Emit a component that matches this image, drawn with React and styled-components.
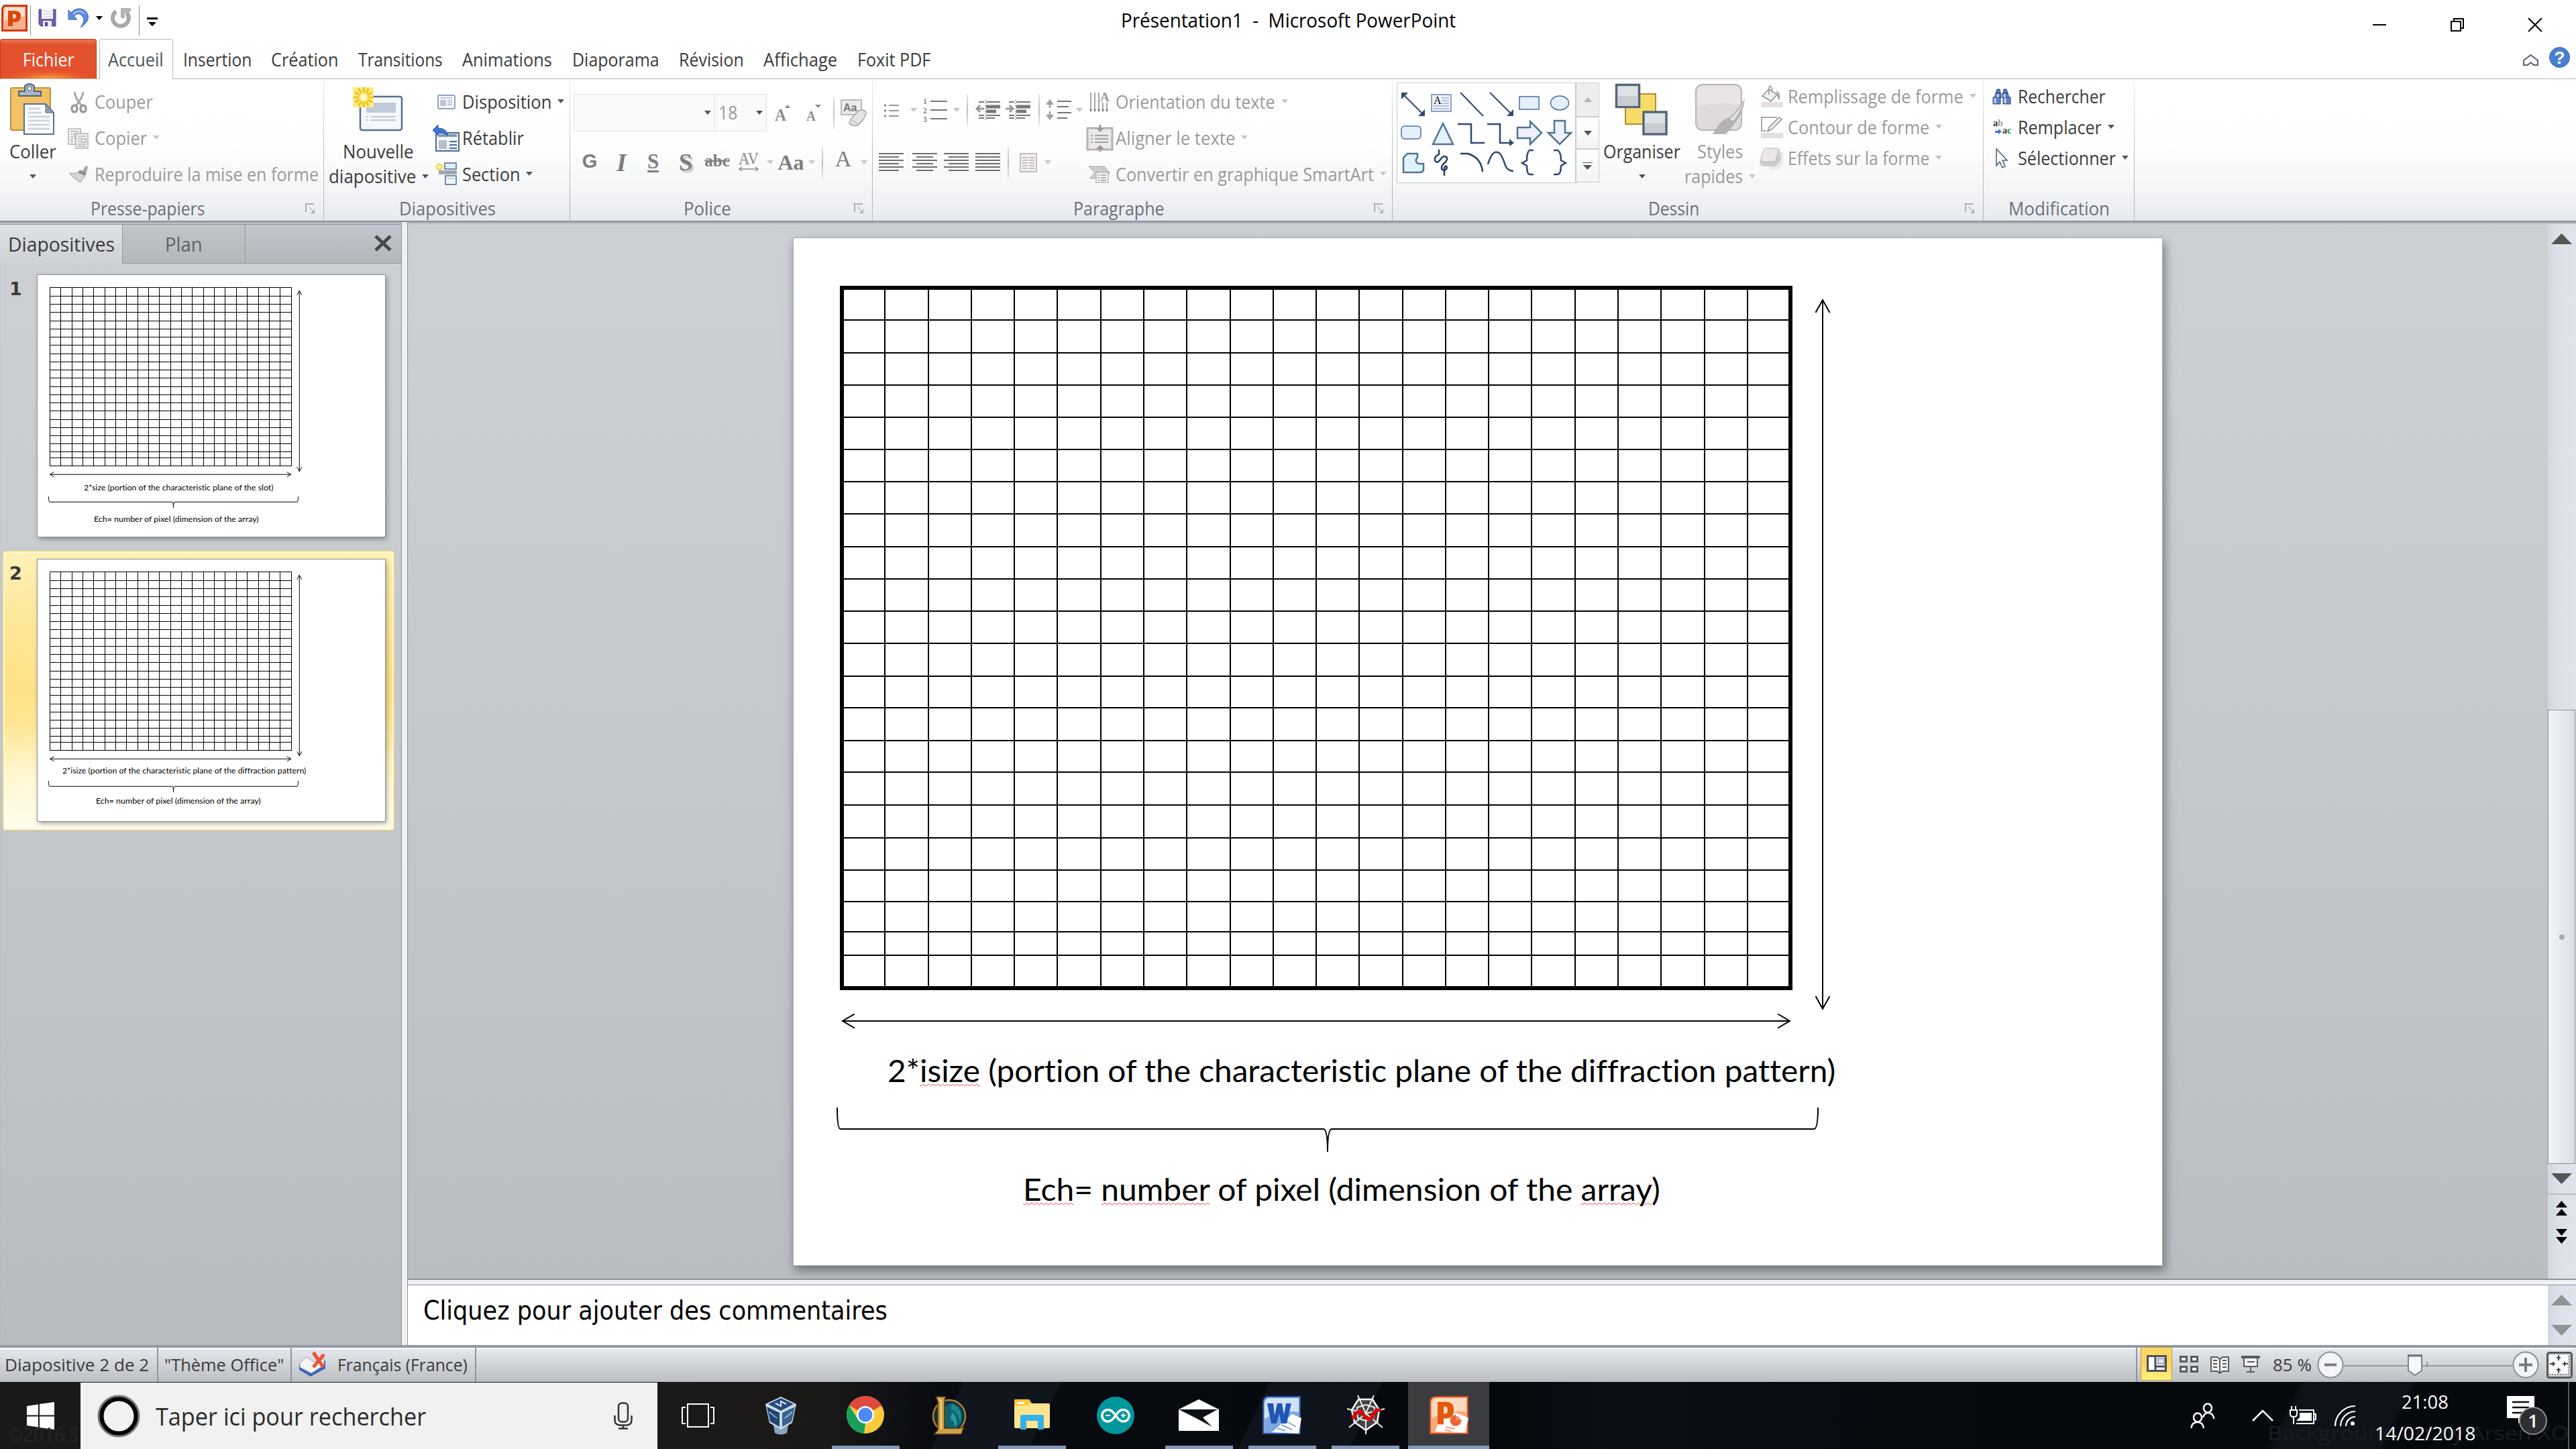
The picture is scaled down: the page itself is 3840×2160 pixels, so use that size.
import React, { useLayoutEffect, useRef, useState } from "react";
import styled, { createGlobalStyle, css } from "styled-components";

const UI = `"Open Sans", "Noto Sans", sans-serif`;

const Global = createGlobalStyle`
  *, *::before, *::after { box-sizing: border-box; }
  body { margin: 0; background: #fff; overflow: hidden; }
  svg { display: block; flex: none; overflow: visible; }
`;

/* ---------- text that fills a given width ---------- */
const FitBox = styled.span`
  display: inline-block;
  flex: none;
  width: ${(p) => p.$w}px;
  white-space: nowrap;
`;
const FitText = styled.span`
  display: inline-block;
  transform-origin: 0 50%;
`;
function Fit({ w, children }) {
  const ref = useRef(null);
  const [scale, setScale] = useState(1);
  useLayoutEffect(() => {
    setScale(w / ref.current.offsetWidth);
  }, [w]);
  return (
    <FitBox $w={w}>
      <FitText ref={ref} style={{ transform: `scaleX(${scale})` }}>{children}</FitText>
    </FitBox>
  );
}

const Svg = ({ w, h, vb, children, ...rest }) => (
  <svg width={w} height={h} viewBox={vb || `0 0 ${w} ${h}`} preserveAspectRatio="none" {...rest}>{children}</svg>
);

/* ---------- shell ---------- */
const Screen = styled.div`
  width: 3840px;
  height: 2160px;
  display: flex;
  flex-direction: column;
  font: 26.5px/36px ${UI};
  color: #3b3b3b;
  overflow: hidden;
`;

/* ---------- title bar ---------- */
const TitleBar = styled.header`
  height: 58px;
  display: grid;
  grid-template-columns: 1671px 1fr 351px;
  background: #fff;
`;
const QuickAccess = styled.div`
  display: grid;
  grid-template-columns: 43px 4px 47px 46px 16px 48px 6px 34px;
  align-items: center;
  justify-items: center;
  padding-bottom: 11px;
`;
const QuickRule = styled.i`
  width: 1px;
  height: 45px;
  margin-top: 8px;
  background: #8d9096;
`;
const WindowTitle = styled.div`
  font-size: 29px;
  line-height: 60px;
  color: #000;
`;
const WindowButtons = styled.div`
  display: grid;
  grid-template-columns: repeat(3, 116px);
  align-items: center;
  justify-items: center;
  padding-top: 9px;
`;
const Lowered = styled.span`
  padding-top: ${(p) => p.$by}px;
`;

const TabRow = styled.nav`
  height: 60px;
  display: flex;
  border-bottom: 1px solid #b6babf;
  line-height: 62px;
`;
const FileTab = styled.div`
  width: 144px;
  height: 59px;
  padding-left: 33px;
  color: #fff;
  border: 1px solid #c43a17;
  border-bottom: 0;
  border-radius: 4px 4px 0 0;
  line-height: 60px;
  background: radial-gradient(ellipse 72px 13px at 50% 100%, #fba544, rgba(240, 110, 50, 0.5) 60%, transparent), linear-gradient(#ee7650, #e3512c 14%, #e4502e 80%, #e0501f);
`;
const ActiveTab = styled.div`
  width: 110px;
  height: 60px;
  margin-left: 4px;
  padding-left: 12px;
  color: #4d5560;
  background: #fff;
  border: 1px solid #b6babf;
  border-bottom: 0;
  border-radius: 4px 4px 0 0;
  line-height: 60px;
`;
const TabList = styled.div`
  display: flex;
  gap: 29.4px;
  padding-left: 15px;
`;
const TabTools = styled.div`
  margin-left: auto;
  padding: 0 9px 4px 0;
  display: flex;
  gap: 16px;
  align-items: center;
`;

/* ---------- ribbon ---------- */
const Ribbon = styled.section`
  height: 213px;
  display: flex;
  background: linear-gradient(#fff 0, #fefefe 48%, #f6f7f8 72%, #eeeff2 90%, #e6e9ef);
  border-bottom: 2px solid #8b9097;
`;
const GroupBox = styled.div`
  width: ${(p) => p.$w}px;
  display: grid;
  grid-template-rows: 174px 37px;
  border-right: 1px solid;
  border-image: linear-gradient(#eceef0, #b4b9c0 60%, #b4b9c0) 1;
`;
const GroupBody = styled.div`
  display: flex;
  min-width: 0;
`;
const GroupFooter = styled.div`
  display: flex;
  align-items: center;
  justify-content: space-between;
  padding: 1px 12px 0 ${(p) => p.$x}px;
  color: #6a7180;
`;
function Group({ w, label, labelX, labelW, launcher, children }) {
  return (
    <GroupBox $w={w}>
      <GroupBody>{children}</GroupBody>
      <GroupFooter $x={labelX}>
        <Fit w={labelW}>{label}</Fit>
        {launcher && (
          <Svg w={15} h={16} fill="none" stroke="#aab0b7" strokeWidth="2">
            <path d="M1 13V1H13" />
            <path d="M6 6l4 4" strokeDasharray="2 1" />
            <path d="M14 8v7H8z" fill="#aab0b7" stroke="none" />
          </Svg>
        )}
      </GroupFooter>
    </GroupBox>
  );
}

const Caret = styled.i`
  flex: none;
  width: 0;
  height: 0;
  border: 5px solid transparent;
  border-top: 6px solid ${(p) => (p.$dim ? "#c2c6cb" : p.$black ? "#000" : "#555")};
  border-bottom: 0;
`;

const BigButton = styled.div`
  width: ${(p) => p.$w}px;
  display: grid;
  grid-template-rows: 90px 36px 37px;
  justify-items: center;
  align-items: center;
  color: ${(p) => (p.$dim ? "#9a9a9a" : "#3b3b3b")};
`;
const BigLine = styled.div`
  display: flex;
  align-items: center;
  gap: 9px;
`;

const Commands = styled.div`
  padding: ${(p) => p.$top}px 0 0 ${(p) => p.$left || 0}px;
  display: flex;
  flex-direction: column;
`;
const CommandRow = styled.div`
  height: ${(p) => p.$h}px;
  display: flex;
  align-items: center;
  color: ${(p) => (p.$dim ? "#9a9a9a" : "#3b3b3b")};
  ${Caret} { margin: -3px 0 0 9px; }
`;
const IconSlot = styled.span`
  width: 40px;
  margin-right: 4px;
  display: flex;
  justify-content: center;
`;
const Command = ({ h = 54, dim, icon, w, label, caret }) => (
  <CommandRow $h={h} $dim={dim}>
    <IconSlot>{icon}</IconSlot>
    <Fit w={w}>{label}</Fit>
    {caret && <Caret $dim={dim} />}
  </CommandRow>
);

const ToolRows = styled.div`
  padding: 22px 0 0 ${(p) => p.$x || 0}px;
  display: flex;
  flex-direction: column;
  gap: 22px;
`;
const ToolRow = styled.div`
  height: ${(p) => p.$h}px;
  display: grid;
  grid-template-columns: ${(p) => p.$cols};
  align-items: center;
  justify-items: center;
  padding-bottom: ${(p) => p.$lift || 0}px;
  color: #7d7d7d;
`;
const ToolRule = styled.i`
  width: 2px;
  height: 48px;
  background: linear-gradient(#e6e8eb, #b9bec5 50%, #e6e8eb);
`;
const Glyph = styled.span`
  font-family: ${(p) => (p.$sans ? `"Liberation Sans", sans-serif` : `"Liberation Serif", serif`)};
  font-size: ${(p) => p.$s || 32}px;
  line-height: 32px;
  margin-top: ${(p) => p.$drop || 0}px;
  ${(p) => p.$b && css`font-weight: 700;`}
  ${(p) => p.$i && css`font-style: italic;`}
  ${(p) => p.$u && css`border-bottom: 3px solid #7d7d7d; line-height: 26px;`}
  ${(p) => p.$strike && css`text-decoration: line-through;`}
  ${(p) => p.$shadow && css`text-shadow: 3px 3px 2px #bbb;`}
`;
const ComboBox = styled.div`
  justify-self: stretch;
  height: 56px;
  display: flex;
  align-items: center;
  justify-content: ${(p) => (p.$end ? "flex-end" : "space-between")};
  padding: 0 5px;
  color: #9a9a9a;
  background: #fafafb;
  border: 1px solid #dfe2e6;
  ${(p) => !p.$end && css`border-left: 0;`}
`;

const Gallery = styled.div`
  width: 267px;
  height: 150px;
  margin: 5px 0 0 6px;
  padding: 9px 0 0 1px;
  display: grid;
  grid-template-columns: repeat(6, 44px);
  grid-auto-rows: 44px;
  background: #fff;
  border: 1px solid #c6cacf;
`;
const GalleryScroll = styled.div`
  width: 35px;
  height: 149px;
  margin-top: 5px;
  display: grid;
  grid-template-rows: 51px 48px 50px;
`;
const GalleryButton = styled.div`
  display: flex;
  align-items: center;
  justify-content: center;
  border: 1px solid #c9ccd2;
  background: ${(p) => (p.$off ? "#eeeeee" : "linear-gradient(#fff,#f1f3f5)")};
`;

/* ---------- workspace ---------- */
const Workspace = styled.main`
  height: 1674px;
  display: flex;
  background: linear-gradient(#cdd1d5, #c4c7cc 50%, #b8bbc0);
`;
const SidePanel = styled.aside`
  width: 599px;
  padding-top: 3px;
  border-right: 1px solid #90979c;
  box-shadow: inset 0 3px 3px -1px #a9aeb5;
`;
const PanelTabs = styled.div`
  height: 56px;
  display: grid;
  grid-template-columns: 182px 183px 1fr;
  border-top: 1px solid #90979c;
  line-height: 57px;
  font-size: 29px;
`;
const PanelTab = styled.div`
  padding-left: ${(p) => p.$x}px;
  ${(p) =>
    p.$active
      ? css`background: linear-gradient(#dfe2e6, #cdd0d5);`
      : css`
          color: #5d6266;
          background: linear-gradient(#c0c6c9, #b3b8bc);
          border-left: 1px solid #90979c;
          border-bottom: 1px solid #90979c;
        `}
`;
const PanelClose = styled.div`
  display: flex;
  align-items: center;
  justify-content: flex-end;
  padding: 0 13px 2px 0;
  background: linear-gradient(#c2c6cf, #b3b7bb);
  border-left: 1px solid #90979c;
  border-bottom: 1px solid #90979c;
`;
const ThumbList = styled.div`
  padding: 7px 0 0 4px;
  display: flex;
  flex-direction: column;
  gap: 7px;
`;
const ThumbItem = styled.div`
  width: 584px;
  height: 417px;
  padding: 12px 0 0 9px;
  display: flex;
  border: 1px solid transparent;
  border-radius: 4px;
  ${(p) =>
    p.$selected &&
    css`
      border-color: #f2cf5b;
      background: linear-gradient(#fff1b8, #ffe695 28%, #fee287 50%, #fee694 62%, #fff7cf 80%, #fffdee);
      box-shadow: inset 0 0 0 2px #fff8d8;
    `}
`;
const ThumbNumber = styled.b`
  width: 42px;
  padding-top: 1px;
  font: 700 27px/40px "DejaVu Sans", sans-serif;
  color: #3a3a3a;
`;
const Thumb = styled.div`
  position: relative;
  width: 518px;
  height: 390px;
  background: #fff;
  outline: 1px solid #8b9196;
  box-shadow: 2px 3px 7px rgba(50, 55, 60, 0.5);
  color: #000;
  font-family: Lato, sans-serif;
`;
const Splitter = styled.div`
  ${(p) =>
    p.$h
      ? css`height: 10px; border-top: 2px solid #8f949c; border-bottom: 1px solid #8f949c;`
      : css`width: 9px; border-right: 1px solid #8f949c;`}
  background: #eff0f2;
`;
const Editor = styled.div`
  flex: 1;
  display: flex;
  flex-direction: column;
`;
const SlideArea = styled.div`
  height: 1575px;
  display: flex;
  justify-content: space-between;
  box-shadow: inset 0 3px 3px -1px #a9aeb5;
`;
const Slide = styled.div`
  position: relative;
  width: 2040px;
  height: 1531px;
  margin: 24px 0 0 575px;
  background: #fff;
  box-shadow: 0 0 0 1px #a4abb2, 3px 7px 14px 1px rgba(60, 66, 72, 0.6);
  color: #000;
  font-family: Lato, sans-serif;
`;
const SlideText = styled.div`
  position: absolute;
  left: ${(p) => p.$x}px;
  top: ${(p) => p.$y}px;
  font-size: ${(p) => p.$s}px;
  line-height: ${(p) => p.$s * 1.4}px;
  font-variant-ligatures: none;
`;
const Misspelt = styled.span`
  text-decoration: underline wavy #f26a6a 1px;
  text-underline-offset: 2px;
  text-decoration-skip-ink: none;
`;
const ScrollColumn = styled.div`
  width: 42px;
  margin-top: ${(p) => p.$top || 0}px;
  display: flex;
  flex-direction: column;
  background: linear-gradient(90deg, #d2d8e0, #dde2ea 40%, #dfe3eb);
`;
const ScrollCell = styled.div`
  height: ${(p) => p.$h}px;
  padding-right: 2px;
  display: flex;
  align-items: center;
  justify-content: center;
  ${(p) => p.$line && css`border-bottom: 2px solid #b9bec5;`}
`;
const ScrollThumb = styled.div`
  height: 677px;
  width: 41px;
  display: flex;
  align-items: center;
  justify-content: center;
  border: 1px solid #8b929b;
  background: linear-gradient(90deg, #f2f4f7, #e4e8ee 60%, #d9dee6);
`;
const Grip = styled.i`
  width: 8px;
  height: 8px;
  border-radius: 50%;
  background: #a3aab4;
`;
const Notes = styled.div`
  flex: 1;
  display: flex;
  justify-content: space-between;
  background: #fff;
`;
const NotesText = styled.div`
  padding: 5px 0 0 23px;
  font: 39px/66px "DejaVu Sans Condensed", "DejaVu Sans", sans-serif;
  font-stretch: condensed;
  color: #000;
`;

/* ---------- status bar ---------- */
const StatusBar = styled.footer`
  height: 55px;
  display: flex;
  align-items: center;
  border-top: 4px solid #929aa5;
  background: linear-gradient(#f8fafc 0, #f8fafc 2px, #e3e6eb 3px, #bbbfc4);
  color: #3c3c3c;
  font-size: 26px;
`;
const StatusCell = styled.div`
  width: ${(p) => p.$w}px;
  height: 100%;
  padding: 0 0 2px ${(p) => p.$x}px;
  display: flex;
  align-items: center;
  gap: 17px;
  border-right: 2px solid #91959b;
`;
const StatusTools = styled.div`
  margin-left: auto;
  height: 100%;
  padding: 0 5px 0 5px;
  display: flex;
  align-items: center;
  border-left: 2px solid #91959b;
`;
const ViewActive = styled.div`
  width: 47px;
  height: 50px;
  margin: -4px 11px 0 0;
  display: flex;
  align-items: center;
  justify-content: center;
  border: 1px solid #c6983a;
  border-radius: 3px;
  background: linear-gradient(#fdd868, #fbd463 50%, #fff27b);
`;
const ViewIcons = styled.div`
  display: flex;
  gap: 18px;
  margin-right: 19px;
`;
const ZoomValue = styled.div`
  margin-right: 8px;
  padding-bottom: 2px;
`;
const ZoomTrack = styled.div`
  width: 251px;
  height: 40px;
  padding-left: 95px;
  display: flex;
  align-items: center;
  background: linear-gradient(#8f97a2, #8f97a2) 0 20px / 100% 2px no-repeat;
`;
const FitButton = styled.div`
  margin-left: 11px;
`;

/* ---------- taskbar ---------- */
const Taskbar = styled.div`
  position: relative;
  height: 100px;
  display: flex;
  color: #fff;
  background:
    linear-gradient(90deg, #191919 0 120px, transparent 120px),
    linear-gradient(116deg, transparent 1290px, #11151d 1292px 1420px, transparent 1424px 1700px, #0f141c 1704px 1850px, transparent 1854px 3080px, #0e121a 3090px 3230px, transparent 3240px),
    linear-gradient(90deg, #1c1a18 980px, #1a1918 1230px, #080b10 1400px, #05080c 2220px, #0b0f17 2400px, #06090d 3000px, #05080c);
`;
const Start = styled.div`
  width: 120px;
  display: flex;
  align-items: center;
  justify-content: center;
`;
const Search = styled.div`
  width: 860px;
  margin-top: 1px;
  padding: 0 37px 0 25px;
  display: flex;
  align-items: center;
  justify-content: space-between;
  background: #f1f1f1;
  color: #2b2b2b;
  font-size: 36px;
`;
const SearchLabel = styled.div`
  display: flex;
  align-items: center;
  gap: 23px;
`;
const AppSlot = styled.div`
  width: 124.2px;
  display: flex;
  justify-content: center;
`;
const AppButton = styled.div`
  width: ${(p) => (p.$active ? 121 : 101)}px;
  padding-top: ${(p) => (p.$open ? 3 : 0)}px;
  display: flex;
  align-items: center;
  justify-content: center;
  ${(p) => p.$open && css`border-bottom: 5px solid #8599b9;`}
  ${(p) => p.$active && css`background: #3a3c3e;`}
`;
const Wallpaper = styled.span`
  position: absolute;
  left: ${(p) => p.$x}px;
  top: ${(p) => p.$y}px;
  font-size: 30px;
  color: ${(p) => p.$c};
  white-space: nowrap;
`;
const Tray = styled.div`
  position: relative;
  margin-left: auto;
  display: grid;
  grid-template-columns: 100px 80px 40px 84px 156px 135px 12px;
  align-items: center;
  justify-items: center;
`;
const Clock = styled.div`
  display: grid;
  justify-items: center;
  font-size: 27px;
  line-height: 47px;
  padding-top: 5px;
`;
const Notif = styled.div`
  justify-self: end;
  padding-right: 31px;
`;
const DesktopEdge = styled.i`
  width: 12px;
  height: 100px;
  border-left: 2px solid #56585b;
`;

/* ---------- icons ---------- */
const PptLogo = ({ w, h }) => (
  <Svg w={w} h={h} vb="0 0 58 58">
    <path d="M8 1H57V57H1V10Q1 2 8 1Z" fill="#fba67a" stroke="#d5491d" strokeWidth="2" />
    <path d="M10 3H55V24Q30 20 3 34V12Q3 4 10 3Z" fill="#ffd9bd" />
    <path d="M8 54L16 34L38 25L58 33L53 56Z" fill="#fff" />
    <circle cx="39" cy="37" r="8.500" fill="#ed6536" />
    <path d="M39 37V28A9 9 0 0 1 48 35Z" fill="#fff" />
    <path d="M39 37V30A7 7 0 0 1 46 36Z" fill="#f58e62" />
    <path d="M24 47l14 3M23 51l10 3" stroke="#f09a78" strokeWidth="2" />
    <path d="M12 9H25Q36 9 36 21Q36 34 24 34H21V43H12ZM21 16V27H23Q27 27 27 21Q27 16 23 16Z" fill="#e0590f" fillRule="evenodd" />
  </Svg>
);
const PptSmall = () => (
  <Svg w={39} h={40}>
    <path d="M5 1.500H37.500V38.500H1.500V8Q2 2 5 1.500Z" fill="#fbb08c" stroke="#cf3a10" strokeWidth="3" />
    <path d="M5 4H35V18Q20 16 4 24Z" fill="#fde0cf" />
    <path d="M10 9H20Q29 9 29 17Q29 26 20 26H17V32H10ZM17 14V21H19Q22 21 22 17.500Q22 14 19 14Z" fill="#d9480f" fillRule="evenodd" />
  </Svg>
);
const SaveIcon = () => (
  <Svg w={27} h={27}>
    <path d="M1 1H26V26H4L1 23Z" fill="#6f5bab" stroke="#5a4895" />
    <rect x="5" y="0" width="17" height="15" fill="#f6f7fb" />
    <path d="M7 4H20M7 8H20M7 12H20" stroke="#c6ccd8" />
    <path d="M7 18H20V27H7Z" fill="#e8e9f2" />
    <path d="M10 20h4v6h-4z" fill="#55439b" />
  </Svg>
);
const UndoIcon = () => (
  <Svg w={32} h={30}>
    <path d="M1 3V17H14L9 12Q16 5 22 12Q27 19 19 29Q33 20 30 10Q26 0 15 1Q9 2 5 7Z" fill="#5d8de0" stroke="#3160b8" />
    <path d="M8 9Q17 1 25 8" stroke="#a9c6f5" strokeWidth="2" fill="none" />
  </Svg>
);
const RedoIcon = () => (
  <Svg w={31} h={30} fill="none">
    <path d="M8 5A12 12 0 1 0 24 7" stroke="#a9a9a9" strokeWidth="6" />
    <path d="M15 0H30V5L21 8V15H15Z" fill="#b4b4b4" />
  </Svg>
);
const PasteIcon = () => (
  <Svg w={68} h={77}>
    <rect x="1" y="6" width="59" height="63" rx="2" fill="#f0c265" stroke="#c0913c" strokeWidth="2" />
    <path d="M13 18V11H22V3Q29-3 36 3V11H46V18Z" fill="#a9b6c4" stroke="#4f6278" strokeWidth="2" />
    <circle cx="29" cy="7" r="3" fill="#fff" stroke="#4f6278" />
    <path d="M21 30H53L65 43V75H21Z" fill="#fdfefe" stroke="#53718f" strokeWidth="2" />
    <path d="M53 30V43H65Z" fill="#8aa0b8" stroke="#46627f" />
    <path d="M27 37H45M27 43H47M27 49H59M27 55H59M27 61H59M27 67H59" stroke="#cdd5de" strokeWidth="3" />
  </Svg>
);
const CutIcon = () => (
  <Svg w={25} h={33} fill="none" stroke="#9a9a9a">
    <path d="M6 1Q7 10 17 22M19 1Q18 10 8 22" strokeWidth="3" stroke="#a8a8a8" />
    <ellipse cx="6" cy="26" rx="4" ry="5" strokeWidth="3.500" />
    <ellipse cx="19" cy="26" rx="4" ry="5" strokeWidth="3.500" />
  </Svg>
);
const CopyIcon = () => (
  <Svg w={32} h={31} stroke="#b3adb2" strokeWidth="1.500">
    <path d="M1 1H19V24H1Z" fill="#f5f2f4" />
    <path d="M4 5H16M4 9H8M4 13H8M4 17H8M4 20H8M10 9h6v6h-6z" fill="none" />
    <path d="M12 8H30V30H12Z" fill="#f5f2f4" />
    <path d="M15 12H27M15 16H18M15 20H18M15 24H27M15 27H27M20 16h7v5h-7z" fill="none" />
  </Svg>
);
const BrushIcon = () => (
  <Svg w={30} h={26}>
    <path d="M21 8L25 1Q28-1 29 3L26 12Z" fill="#a5a3a6" />
    <path d="M17 6L27 11L25 15L14 10Z" fill="#8f8d90" />
    <path d="M14 10L25 15L18 25Q8 20 1 11Q9 12 14 10Z" fill="#d7d3d6" stroke="#a5a1a4" />
  </Svg>
);
const Burst = ({ c = 16, s = 1 }) => (
  <g stroke="#f0c419" strokeWidth={3 * s}>
    {[0, 30, 60, 90, 120, 150].map((a) => (
      <line key={a} x1={c - 15 * s} x2={c + 15 * s} y1={c} y2={c} transform={`rotate(${a} ${c} ${c})`} />
    ))}
    <circle cx={c} cy={c} r={6 * s} fill="#fffbd0" stroke="#ffe76a" strokeWidth={2 * s} />
  </g>
);
const NewSlideIcon = () => (
  <Svg w={76} h={68}>
    <rect x="11" y="15" width="62" height="50" rx="3" fill="#f5f8fc" stroke="#55718f" strokeWidth="2.500" />
    <rect x="20" y="24" width="44" height="15" fill="#c2c9d8" />
    <path d="M19 45h4M26 45H64M19 50h4M26 50H64" stroke="#c2c9d8" strokeWidth="2" />
    <rect x="0" y="1" width="31" height="30" fill="#fdeb84" />
    <Burst />
  </Svg>
);
const LayoutIcon = () => (
  <Svg w={27} h={22}>
    <rect x="1" y="1" width="25" height="20" rx="2" fill="#f7f9fc" stroke="#6f87a8" strokeWidth="1.500" />
    <rect x="4" y="8" width="9" height="9" fill="#bcc6d6" />
    <path d="M5 5H22M15 9H22M15 12H22M15 15H22" stroke="#a9b6ca" strokeWidth="1.500" />
  </Svg>
);
const ResetIcon = () => (
  <Svg w={40} h={41}>
    <rect x="5" y="12" width="34" height="27" fill="#eef4fb" stroke="#47699b" strokeWidth="2" />
    <path d="M8 16H36" stroke="#8795ab" strokeWidth="4" />
    <rect x="9" y="23" width="12" height="13" fill="#b7bfc7" />
    <path d="M25 25H36M25 30H36M25 35H36" stroke="#44699f" strokeWidth="2" />
    <path d="M0 8L8 0V5Q21 5 23 16Q15 11 8 12V16Z" fill="#3f76d6" stroke="#2957ad" />
  </Svg>
);
const SectionIcon = () => (
  <Svg w={32} h={32}>
    <rect x="14" y="-1" width="17" height="9" fill="#e3efff" stroke="#486a99" strokeWidth="1.500" />
    <path d="M5 13H32" stroke="#9da5ad" strokeWidth="6" />
    <rect x="15" y="18" width="16" height="13" fill="#f1f7ff" stroke="#486a99" strokeWidth="1.500" />
    <path d="M18 22H28" stroke="#8ba0bb" />
    <g transform="translate(0 -1)"><Burst c={6} s={0.4} /></g>
  </Svg>
);
const EraserIcon = () => (
  <Svg w={40} h={41}>
    <rect x="1" y="1" width="30" height="22" fill="#eceaec" stroke="#bdb8bc" strokeWidth="2" />
    <text x="4" y="18" fontFamily="Liberation Sans" fontWeight="700" fontSize="16" fill="#777">Aa</text>
    <path d="M24 20Q32 12 38 19Q38 27 27 38Q18 42 13 35Q14 30 24 20Z" fill="#e6e1e4" stroke="#a7a2a5" strokeWidth="1.500" />
    <path d="M17 31L26 37" stroke="#a7a2a5" />
  </Svg>
);
const SizeIcon = ({ up }) => (
  <Svg w={24} h={24} fill="#8c8c8c">
    <text x="0" y="24" fontFamily="Liberation Serif" fontWeight="700" fontSize={up ? 25 : 21} textLength={up ? 17 : 14} lengthAdjust="spacingAndGlyphs">A</text>
    <path d={up ? "M15 5L19 0L23 5Z" : "M13 0H22L17.500 5Z"} />
  </Svg>
);
const SpacingGlyph = () => (
  <Svg w={30} h={30} fill="#8c8c8c">
    <text x="0" y="18" fontFamily="Liberation Serif" fontSize="26" textLength="30" lengthAdjust="spacingAndGlyphs">AV</text>
    <path d="M1 25H29M5 22L1 25L5 28M25 22L29 25L25 28" fill="none" stroke="#8c8c8c" strokeWidth="1.500" />
  </Svg>
);
const BulletsIcon = () => (
  <Svg w={23} h={21} stroke="#777" strokeWidth="1.500">
    <path d="M8 3H23M8 11H23M8 19H23" />
    <path d="M1 3h3M1 11h3M1 19h3" stroke="#8a8a8a" strokeWidth="3" />
  </Svg>
);
const NumbersIcon = () => (
  <Svg w={37} h={37} stroke="#777" strokeWidth="2">
    <path d="M12 5H37M12 18H37M12 31H37" />
    <g fill="#888" stroke="none" fontFamily="Liberation Serif" fontWeight="700" fontSize="12">
      <text x="1" y="9">1</text><text x="1" y="23">2</text><text x="1" y="36">3</text>
    </g>
  </Svg>
);
const IndentIcon = ({ right }) => (
  <Svg w={38} h={32} stroke="#777" strokeWidth="2">
    <path d="M6 4H14M17 4H38M6 24H14M17 24H38M6 28H14M17 28H30" />
    <path d="M17 11H38M17 18H32" strokeWidth="5" />
    <path d="M16 1V31" strokeDasharray="2 2" strokeWidth="1" />
    <path d={right ? "M1 14H12M7 9L12 14L7 19" : "M3 14H14M8 9L3 14L8 19"} fill="none" strokeWidth="3" stroke="#9a9a9a" />
  </Svg>
);
const LineSpacingIcon = () => (
  <Svg w={38} h={32} stroke="#777" strokeWidth="2">
    <path d="M17 3H38M17 11H34M17 20H38M17 28H32" />
    <path d="M6 3V13M6 18V28" stroke="#aaa" strokeWidth="3" />
    <path d="M0 8L6 0L12 8ZM0 23L6 31L12 23Z" fill="#a0a0a0" stroke="none" />
  </Svg>
);
const ALIGN = {
  left: ["0 37", "0 30", "0 37", "0 30", "0 37", "0 30"],
  center: ["0 37", "6 31", "0 37", "6 31", "0 37", "6 31"],
  right: ["0 37", "7 37", "0 37", "7 37", "0 37", "7 37"],
  full: ["0 37", "0 37", "0 37", "0 37", "0 37", "0 37"],
};
const AlignIcon = ({ kind }) => (
  <Svg w={37} h={28} stroke="#6f6f6f" strokeWidth="2">
    {ALIGN[kind].map((r, i) => {
      const [a, b] = r.split(" ");
      return <line key={i} x1={a} x2={b} y1={1 + i * 5} y2={1 + i * 5} />;
    })}
  </Svg>
);
const ColumnsIcon = () => (
  <Svg w={26} h={29}>
    <rect x="1" y="1" width="24" height="27" fill="#f4f0f3" stroke="#b0aaaf" strokeWidth="1.500" />
    <path d="M4 7h8M4 11h8M4 15h8M4 19h8M4 23h8M14 7h8M14 11h8M14 15h8M14 19h8M14 23h8" stroke="#b5b0b4" strokeWidth="1.500" />
  </Svg>
);
const OrientIcon = () => (
  <Svg w={30} h={31} stroke="#777" strokeWidth="1.300">
    <path d="M2 1V29M8 1V29M14 1V29M20 16V29M26 16V29" />
    <path d="M0 26h4l-2 4zM6 26h4l-2 4zM12 26h4l-2 4zM18 26h4l-2 4zM24 26h4l-2 4z" fill="#777" stroke="none" />
    <text x="16" y="14" fill="#999" stroke="none" fontFamily="Liberation Serif" fontWeight="700" fontSize="19">A</text>
  </Svg>
);
const AlignTextIcon = () => (
  <Svg w={41} h={40}>
    <rect x="2" y="5" width="37" height="32" fill="#ebe7ea" stroke="#b6b2b5" strokeWidth="3" />
    <path d="M7 16h3M13 16H33M7 21h3M13 21H33M7 26h3M13 26H33" stroke="#8f8f8f" strokeWidth="1.500" />
    <path d="M21 0V6M21 40V35" stroke="#999" strokeWidth="3" />
    <path d="M15 5H27L21 11ZM15 36H27L21 30Z" fill="#999" />
  </Svg>
);
const SmartArtIcon = () => (
  <Svg w={32} h={26}>
    <path d="M0 1H23L31 10L26 19H2L9 10Z" fill="#cfcbce" stroke="#a5a1a4" />
    <rect x="11" y="10" width="18" height="15" fill="#f5f3f5" stroke="#a5a1a4" />
    <path d="M14 14h2M18 14H26M14 18h2M18 18H26M14 22h2M18 22H26" stroke="#9a969a" strokeWidth="1.500" />
  </Svg>
);
const ArrangeIcon = () => (
  <Svg w={79} h={77}>
    <rect x="15" y="15" width="45" height="45" fill="#f7dc6a" stroke="#b08d2f" strokeWidth="2" />
    <rect x="1.500" y="1.500" width="34" height="33" fill="#dfe2e4" stroke="#56657a" strokeWidth="3.500" />
    <rect x="4" y="18" width="30" height="15" fill="#c9cdd1" />
    <rect x="42" y="42" width="34" height="33" fill="#dfe2e4" stroke="#56657a" strokeWidth="3.500" />
    <rect x="44" y="59" width="30" height="14" fill="#c9cdd1" />
  </Svg>
);
const StylesIcon = () => (
  <Svg w={74} h={76}>
    <rect x="1" y="1" width="68" height="68" rx="10" fill="#dedadd" stroke="#b9b5b8" strokeWidth="2" />
    <path d="M3 12Q3 3 12 3H58Q67 3 67 12V30Q30 26 3 34Z" fill="#e8e4e7" />
    <path d="M74 22Q72 44 58 60L46 75H26Q36 56 46 52Q56 50 74 22Z" fill="#b5b2b4" />
    <path d="M73 26Q66 44 56 56L52 52Q64 42 73 26Z" fill="#e5e3e4" />
  </Svg>
);
const FillIcon = () => (
  <Svg w={33} h={34}>
    <rect x="0" y="25" width="33" height="8" fill="#e4dfe2" />
    <path d="M2 16L12 6L24 14L15 24Z" fill="#f0f0f0" stroke="#8f8f8f" strokeWidth="1.500" />
    <path d="M12 14V3Q14-1 16 4L17 9" fill="none" stroke="#999" strokeWidth="1.500" />
    <path d="M23 8Q31 13 27 23Q24 18 23 8Z" fill="#a6a6a6" />
  </Svg>
);
const OutlineIcon = () => (
  <Svg w={33} h={34}>
    <rect x="0" y="25" width="33" height="8" fill="#e4dfe2" />
    <path d="M24 2H1V22H8" fill="none" stroke="#8f8f8f" strokeWidth="1.500" />
    <path d="M10 23L12 17L27 2L31 5L16 20Z" fill="#eee" stroke="#909090" strokeWidth="1.500" />
  </Svg>
);
const EffectsIcon = () => (
  <Svg w={38} h={34}>
    <path d="M12 8H36V26L30 33H16Z" fill="#e3e3e3" opacity=".7" />
    <path d="M9 2H27Q31 2 31 6L33 20L25 29H7Q1 28 1 21Z" fill="#cfcbce" />
    <path d="M10 2H26Q30 3 29 7L25 20Q24 22 21 22H5Q2 21 3 17L7 5Q8 2 10 2Z" fill="#eae6e9" stroke="#b9b5b8" />
  </Svg>
);
const FindIcon = () => (
  <Svg w={28} h={24} fill="#5f80bd" stroke="#27457e">
    <path d="M7 1h4l1 6H5zM17 1h4l2 6h-7zM5 7h8v7H3zM15 7h8l2 7H15z" />
    <path d="M1 13H12V23H1ZM16 13H27V23H16Z" />
    <path d="M4 14V22M19 14V22M8 8V13M18 8V13" stroke="#c4d4f2" strokeWidth="3" />
  </Svg>
);
const ReplaceIcon = () => (
  <Svg w={27} h={23}>
    <g fontFamily="Liberation Serif" fontWeight="700" fontSize="14">
      <text x="0" y="9" fill="#333">a</text><text x="7" y="9" fill="#999">b</text>
      <text x="14" y="20" fill="#333">a</text><text x="21" y="20" fill="#1f7a1f">c</text>
    </g>
    <path d="M3 12V16H8V13L13 17L8 21V19H3Z" fill="#3f6fd0" />
  </Svg>
);
const SelectIcon = () => (
  <Svg w={20} h={30}>
    <path d="M2 1V26L7 20L11 29L15 27L11 18H18Z" fill="#fff" stroke="#4b5f7c" strokeWidth="1.500" />
  </Svg>
);

const NAVY = "#2f4876";
const TEAL = "#4f7397";
const SHAPES = [
  <g key="0" stroke={NAVY} fill={NAVY} strokeWidth="2"><path d="M8 8L36 36" /><path d="M5 5h10L5 15zM40 40H30L40 30z" stroke="none" /></g>,
  <g key="1"><rect x="6" y="8" width="29" height="25" fill="#eef3fb" stroke="#6f83a8" strokeWidth="1.500" /><text x="9" y="22" fontFamily="Liberation Serif" fontSize="16" fill="#000">A</text><path d="M21 13H32M21 17H32M21 21H32M9 25H32M9 29H32" stroke="#9fb2d8" strokeWidth="1.500" /></g>,
  <path key="2" d="M5 5L39 40" stroke={NAVY} strokeWidth="2" />,
  <g key="3" stroke={NAVY} strokeWidth="2"><path d="M5 5L36 36" /><path d="M40 40H30L40 30z" fill={NAVY} stroke="none" /></g>,
  <rect key="4" x="5" y="11" width="29" height="19" fill="#e6f0fc" stroke="#4b6fa5" strokeWidth="1.500" />,
  <ellipse key="5" cx="21" cy="20.500" rx="13.500" ry="10.500" fill="#e6f0fc" stroke="#4b6fa5" strokeWidth="1.500" />,
  <rect key="6" x="5" y="11" width="29" height="19" rx="5" fill="#e6f0fc" stroke="#4b6fa5" strokeWidth="1.500" />,
  <path key="7" d="M23 7L38 38H8Z" fill="#e6f2fb" stroke={TEAL} strokeWidth="2.500" />,
  <path key="8" d="M1 8H21V36H41" fill="none" stroke={NAVY} strokeWidth="2.500" />,
  <g key="9"><path d="M1 8H20V36H36" fill="none" stroke={NAVY} strokeWidth="2.500" /><path d="M34 30L41 36L34 41z" fill={NAVY} /></g>,
  <path key="10" d="M2 13H21V4L38 21L21 38V29H2Z" fill="#eef1fc" stroke={TEAL} strokeWidth="2.500" />,
  <path key="11" d="M13 3H29V21H38L21 38L4 21H13Z" fill="#eef1fc" stroke={TEAL} strokeWidth="2.500" />,
  <path key="12" d="M8 33V14L14 8H29V14Q24 19 30 23H38V33Q36 36 32 36H8Z" fill="#e0f2fb" stroke={TEAL} strokeWidth="2.500" />,
  <path key="13" d="M17 2V9Q10 12 11 18Q14 24 19 17Q24 9 29 14Q30 18 24 23Q19 29 22 32Q27 34 29 29Q28 24 25 29V41" fill="none" stroke="#234261" strokeWidth="2.500" />,
  <path key="14" d="M5 8H16Q36 14 38 35" fill="none" stroke="#234261" strokeWidth="2.500" />,
  <path key="15" d="M2 24Q8 4 16 6Q22 6 28 26Q32 34 40 34" fill="none" stroke={NAVY} strokeWidth="2.500" />,
  <path key="16" d="M26 3H20Q16 6 16 18L9 22L16 26Q16 38 20 39H26" fill="none" stroke={NAVY} strokeWidth="2.500" />,
  <path key="17" d="M12 3H18Q23 6 23 18L30 22L23 26Q23 38 18 39H12" fill="none" stroke={NAVY} strokeWidth="2.500" />,
];

/* ---------- slide drawing ---------- */
const COLS = Array.from({ length: 21 }, (_, i) => 72 + (i + 1) * 64.28);
const ROWS = [123, 172, 220, 268, 316, 364, 412, 461, 509, 557, 605, 654, 701, 750, 797, 846, 895, 943, 990, 1035, 1070];
const Drawing = ({ w, h, sw, frame, head }) => (
  <Svg w={w} h={h} vb={`0 0 2040 1531`} fill="none" stroke="#000" strokeWidth={sw}>
    <g shapeRendering="crispEdges">
      <rect x="72" y="74" width="1414" height="1043.500" strokeWidth={frame} />
      {COLS.map((x) => <line key={x} x1={x} x2={x} y1="74" y2="1117" />)}
      {ROWS.map((y) => <line key={y} x1="72" x2="1486" y1={y - 1} y2={y - 1} />)}
    </g>
    <path d={`M1534 92V1149M${1534 - head} ${92 + head * 1.8}L1534 92L${1534 + head} ${92 + head * 1.8}M${1534 - head} ${1149 - head * 1.8}L1534 1149L${1534 + head} ${1149 - head * 1.8}`} />
    <path d={`M73 1167H1485M${73 + head * 1.7} ${1167 - head}L73 1167L${73 + head * 1.7} ${1167 + head}M${1485 - head * 1.7} ${1167 - head}L1485 1167L${1485 - head * 1.7} ${1167 + head}`} />
    <path d="M65 1296Q65 1328 70 1328H790Q796 1329 796 1362Q796 1329 802 1328H1521Q1527 1328 1527 1296" />
  </Svg>
);

const ScrollArrow = ({ down, off }) => (
  <Svg w={31} h={16}><path d={down ? "M0 0H31L15.500 16Z" : "M0 16H31L15.500 0Z"} fill={off ? "#8a9795" : "#555"} /></Svg>
);
const DoubleArrow = ({ down }) => (
  <Svg w={17} h={22} fill="#000"><path d={down ? "M0 0H17L8.500 10ZM0 12H17L8.500 22Z" : "M0 10H17L8.500 0ZM0 22H17L8.500 12Z"} /></Svg>
);
const ZoomButton = ({ plus }) => (
  <Svg w={40} h={41}>
    <ellipse cx="20" cy="20.500" rx="18.500" ry="19" fill="#f4f5f7" stroke="#8a919a" strokeWidth="2" />
    <path d={plus ? "M10 20.500H30M20 10V31" : "M11 20.500H29"} stroke="#777b80" strokeWidth="4" />
  </Svg>
);

/* ---------- app icons ---------- */
const ChromeIcon = () => (
  <Svg w={56} h={56}>
    <circle cx="28" cy="28" r="28" fill="#fcc93c" />
    <path d="M28 28L3.800 14A28 28 0 0 1 52.200 14Z" fill="#dd4b3e" />
    <path d="M28 0A28 28 0 0 1 53 15.500H28Z" fill="#dd4b3e" />
    <path d="M3.800 14L17 35L28 41L26 56A28 28 0 0 1 3.800 14Z" fill="#1a9f5b" />
    <circle cx="28" cy="28" r="13" fill="#fff" />
    <circle cx="28" cy="28" r="10.500" fill="#4c8bf5" />
  </Svg>
);
const LolIcon = () => (
  <Svg w={54} h={58}>
    <ellipse cx="27" cy="30" rx="24" ry="24" fill="#0a3640" stroke="#b07f30" strokeWidth="2.500" />
    <ellipse cx="31" cy="30" rx="15" ry="19" fill="#0f6470" />
    <path d="M31 12Q48 18 44 42Q40 22 29 20Z" fill="#1c8590" />
    <path d="M31 24Q42 34 36 48Q35 36 29 34Z" fill="#2a9ba3" />
    <path d="M7 1H22L20 6V48H42L49 46L45 57H4L10 51V8Z" fill="#d0a046" stroke="#4d3410" strokeWidth="1.500" />
    <path d="M12 5L15 8V50" fill="none" stroke="#f2d382" strokeWidth="2" />
  </Svg>
);
const ExplorerIcon = () => (
  <Svg w={54} h={46}>
    <path d="M0 2Q0 0 3 0H22L26 6H51Q53 6 53 8V41Q53 43 51 43H2Q0 43 0 41Z" fill="#ffe48f" />
    <path d="M0 2Q0 0 3 0H22L25 5L20 9H0Z" fill="#fcc531" />
    <rect x="4" y="4" width="11" height="3" fill="#fff" />
    <path d="M9 45V26Q9 23 12 23H41Q44 23 44 26V45H35V32H18V45Z" fill="#33b1e8" />
  </Svg>
);
const ArduinoIcon = () => (
  <Svg w={56} h={56} fill="none" stroke="#fff">
    <circle cx="28" cy="28" r="28" fill="#00979c" stroke="none" />
    <path d="M28 28Q22 19 16.500 19.500A8.700 8.700 0 0 0 16.500 37Q22 37 28 28Q34 19 39.500 19.500A8.700 8.700 0 0 1 39.500 37Q34 37 28 28Z" strokeWidth="3.500" />
    <path d="M13 28H20M36 28H43M39.500 24.500V31.500" strokeWidth="2" />
  </Svg>
);
const MailIcon = () => (
  <Svg w={60} h={47}>
    <path d="M0 15L30 0L60 15V47H0Z" fill="#fff" />
    <path d="M0 15H58L36 27L50 41L24 27Z" fill="#0d1015" />
  </Svg>
);
const WordIcon = () => (
  <Svg w={58} h={57}>
    <path d="M8 1H56V56H1V10Q1 2 8 1Z" fill="#7fa8df" stroke="#2c559d" strokeWidth="2" />
    <path d="M10 3H54V24Q28 20 3 34V12Q3 4 10 3Z" fill="#cfe2f7" />
    <path d="M14 54L44 27L58 33L54 56Z" fill="#fff" />
    <path d="M22 48L34 52M28 43L44 50M36 38L50 46" stroke="#8fa6d6" strokeWidth="2" />
    <path d="M7 11H16L18 29L22 11H29L32 29L35 11H43L36 41H28L25 26L21 41H13Z" fill="#1f55b5" />
  </Svg>
);
const SpyderIcon = () => (
  <Svg w={58} h={58} fill="none">
    <path d="M18 6H39L49 22L46 40L29 52L12 40L8 22Z" fill="#454545" stroke="#fff" strokeWidth="2.500" />
    <path d="M17 0L29 27L41 0M1 20L29 27L57 20M4 48L29 27L54 48M29 27V58M16 18L29 14L42 18L40 34L29 38L17 34Z" stroke="#eee" strokeWidth="2" />
    <path d="M10 34Q17 20 24 26Q30 38 38 34Q40 22 49 22" stroke="#e80000" strokeWidth="5" strokeLinecap="round" />
  </Svg>
);
const VBoxIcon = () => (
  <Svg w={54} h={58}>
    <path d="M14 44L36 44L34 55Q25 60 16 55Z" fill="#8ca3c0" />
    <path d="M25 1L48 12L42 40L25 50L8 40L2 12Z" fill="#cbdaea" />
    <path d="M25 3L44 12L25 22L6 12Z" fill="#244a78" />
    <path d="M4 16L23 25V46L9 38Z" fill="#1f4471" />
    <path d="M46 16L27 25V46L41 38Z" fill="#3a628f" />
    <path d="M17 11L25 15L25 8L33 12" stroke="#dfe9f5" strokeWidth="2" fill="none" />
    <path d="M8 24L19 33M42 24L31 33" stroke="#b7c9df" strokeWidth="2" strokeDasharray="3 1" />
  </Svg>
);
const TaskViewIcon = () => (
  <Svg w={53} h={36} fill="none" stroke="#fff" strokeWidth="2">
    <rect x="9" y="1" width="31" height="34" />
    <path d="M6 6H1V30H6M43 6H48V30H43" />
  </Svg>
);

const TABS = [["Insertion", 102], ["Création", 100], ["Transitions", 126], ["Animations", 134], ["Diaporama", 130], ["Révision", 97], ["Affichage", 110], ["Foxit PDF", 109]];
const APPS = [
  { id: "view", icon: <TaskViewIcon /> },
  { id: "vbox", icon: <VBoxIcon /> },
  { id: "chrome", icon: <ChromeIcon />, open: true },
  { id: "lol", icon: <LolIcon /> },
  { id: "files", icon: <ExplorerIcon />, open: true },
  { id: "arduino", icon: <ArduinoIcon /> },
  { id: "mail", icon: <MailIcon />, open: true },
  { id: "word", icon: <WordIcon />, open: true },
  { id: "spyder", icon: <SpyderIcon />, open: true },
  { id: "ppt", icon: <PptLogo w={58} h={57} />, open: true, active: true },
];
const THUMBS = [
  { n: 1, a: ["2*size (portion of the characteristic plane of the slot)", 69, 282, 309], b: [84, 246, 356] },
  { n: 2, a: ["2*isize (portion of the characteristic plane of the diffraction pattern)", 37, 363, 307], b: [87, 246, 352], selected: true },
];

function RibbonBar() {
  return (
    <Ribbon>
      <Group w={483} label="Presse-papiers" labelX={135} labelW={171} launcher>
        <BigButton $w={97}>
          <PasteIcon />
          <Fit w={70}>Coller</Fit>
          <Caret />
        </BigButton>
        <Commands $top={7}>
          <Command dim icon={<CutIcon />} w={87} label="Couper" />
          <Command dim icon={<CopyIcon />} w={78} label="Copier" caret />
          <Command dim icon={<BrushIcon />} w={334} label="Reproduire la mise en forme" />
        </Commands>
      </Group>

      <Group w={367} label="Diapositives" labelX={112} labelW={144}>
        <BigButton $w={162}>
          <NewSlideIcon />
          <Fit w={106}>Nouvelle</Fit>
          <BigLine><Fit w={130}>diapositive</Fit><Caret /></BigLine>
        </BigButton>
        <Commands $top={7}>
          <Command icon={<LayoutIcon />} w={133} label="Disposition" caret />
          <Command icon={<ResetIcon />} w={92} label="Rétablir" />
          <Command icon={<SectionIcon />} w={86} label="Section" caret />
        </Commands>
      </Group>

      <Group w={451} label="Police" labelX={169} labelW={71} launcher>
        <ToolRows $x={5}>
          <ToolRow $h={56} $cols="211px 77px 47px 47px 12px 48px">
            <ComboBox $end><Caret /></ComboBox>
            <ComboBox><Fit w={28}>18</Fit><Caret /></ComboBox>
            <SizeIcon up />
            <SizeIcon />
            <ToolRule />
            <EraserIcon />
          </ToolRow>
          <ToolRow $h={44} $cols="48px 47px 47px 50px 44px 50px 14px 48px 13px 19px 44px 18px">
            <Glyph $sans $b $s={29} $drop={-5}>G</Glyph>
            <Glyph $b $i $s={38}>I</Glyph>
            <Glyph $b $u $s={31}>S</Glyph>
            <Glyph $b $shadow $s={36}>S</Glyph>
            <Glyph $strike $b $s={25} $drop={-5}>abc</Glyph>
            <SpacingGlyph />
            <Caret $dim />
            <Glyph $b $s={32}>Aa</Glyph>
            <Caret $dim />
            <ToolRule />
            <Glyph $s={34} $drop={-11}>A</Glyph>
            <Caret $dim />
          </ToolRow>
        </ToolRows>
      </Group>

      <Group w={775} label="Paragraphe" labelX={299} labelW={136} launcher>
        <ToolRows>
          <ToolRow $h={56} $lift={8} $cols="54px 14px 49px 16px 16px 43px 48px 15px 43px 20px">
            <BulletsIcon />
            <Caret $dim />
            <NumbersIcon />
            <Caret $dim />
            <ToolRule />
            <IndentIcon />
            <IndentIcon right />
            <ToolRule />
            <LineSpacingIcon />
            <Caret $dim />
          </ToolRow>
          <ToolRow $h={44} $lift={4} $cols="54px 46px 48px 46px 16px 43px 16px">
            <AlignIcon kind="left" />
            <AlignIcon kind="center" />
            <AlignIcon kind="right" />
            <AlignIcon kind="full" />
            <ToolRule />
            <ColumnsIcon />
            <Caret $dim />
          </ToolRow>
        </ToolRows>
        <Commands $top={7}>
          <Command dim icon={<OrientIcon />} w={238} label="Orientation du texte" caret />
          <Command dim icon={<AlignTextIcon />} w={178} label="Aligner le texte" caret />
          <Command dim icon={<SmartArtIcon />} w={385} label="Convertir en graphique SmartArt" caret />
        </Commands>
      </Group>

      <Group w={881} label="Dessin" labelX={381} labelW={76} launcher>
        <Gallery>
          {SHAPES.map((shape, i) => <Svg key={i} w={44} h={44} fill="none">{shape}</Svg>)}
        </Gallery>
        <GalleryScroll>
          <GalleryButton $off><Svg w={12} h={7}><path d="M0 7H12L6 0Z" fill="#b5b5b5" /></Svg></GalleryButton>
          <GalleryButton><Svg w={12} h={7}><path d="M0 0H12L6 7Z" fill="#555" /></Svg></GalleryButton>
          <GalleryButton><Svg w={15} h={12}><path d="M0 1H15V2H0ZM1 5H14L7.500 12Z" fill="#555" /></Svg></GalleryButton>
        </GalleryScroll>
        <BigButton $w={127}>
          <ArrangeIcon />
          <Fit w={115}>Organiser</Fit>
          <Caret />
        </BigButton>
        <BigButton $w={104} $dim>
          <StylesIcon />
          <Fit w={68}>Styles</Fit>
          <BigLine><Fit w={87}>rapides</Fit><Caret $dim /></BigLine>
        </BigButton>
        <Commands $top={3} $left={6}>
          <Command h={46} dim icon={<FillIcon />} w={262} label="Remplissage de forme" caret />
          <Command h={46} dim icon={<OutlineIcon />} w={211} label="Contour de forme" caret />
          <Command h={46} dim icon={<EffectsIcon />} w={211} label="Effets sur la forme" caret />
        </Commands>
      </Group>

      <Group w={225} label="Modification" labelX={37} labelW={151}>
        <Commands $top={3} $left={7}>
          <Command h={46} icon={<FindIcon />} w={131} label="Rechercher" />
          <Command h={46} icon={<ReplaceIcon />} w={125} label="Remplacer" caret />
          <Command h={46} icon={<SelectIcon />} w={146} label="Sélectionner" caret />
        </Commands>
      </Group>
    </Ribbon>
  );
}

export default function App() {
  return (
    <Screen>
      <Global />
      <TitleBar>
        <QuickAccess>
          <PptSmall />
          <QuickRule />
          <SaveIcon />
          <UndoIcon />
          <Caret $black />
          <RedoIcon />
          <QuickRule />
          <Lowered $by={12}><Svg w={16} h={13}><path d="M0 0H16V3H0ZM2 7H14L8 13Z" /></Svg></Lowered>
        </QuickAccess>
        <WindowTitle><Fit w={499}>Présentation1&nbsp; -&nbsp; Microsoft PowerPoint</Fit></WindowTitle>
        <WindowButtons>
          <Svg w={20} h={2}><rect width="20" height="2" /></Svg>
          <Svg w={20} h={20} fill="none" stroke="#000" strokeWidth="2"><path d="M5 5V1H19V15H15M1 5H15V19H1Z" /></Svg>
          <Svg w={20} h={20} stroke="#000" strokeWidth="2"><path d="M0 0L20 20M20 0L0 20" /></Svg>
        </WindowButtons>
      </TitleBar>

      <TabRow>
        <FileTab><Fit w={77}>Fichier</Fit></FileTab>
        <ActiveTab><Fit w={83}>Accueil</Fit></ActiveTab>
        <TabList>
          {TABS.map(([t, w]) => <Fit key={t} w={w}>{t}</Fit>)}
        </TabList>
        <TabTools>
          <Lowered $by={7}>
            <Svg w={23} h={17} fill="#fff" stroke="#5a626c" strokeWidth="2">
              <path d="M1 9L11.500 1L22 9V16H16L11.500 12L7 16H1Z" />
            </Svg>
          </Lowered>
          <Svg w={31} h={31}>
            <circle cx="15.500" cy="15.500" r="15" fill="#4a7fd0" stroke="#2f62b3" />
            <text x="15.500" y="25" textAnchor="middle" fontFamily="Liberation Sans" fontWeight="700" fontSize="26" fill="#fff">?</text>
          </Svg>
        </TabTools>
      </TabRow>

      <RibbonBar />

      <Workspace>
        <SidePanel>
          <PanelTabs>
            <PanelTab $active $x={12}><Fit w={159}>Diapositives</Fit></PanelTab>
            <PanelTab $x={63}><Fit w={56}>Plan</Fit></PanelTab>
            <PanelClose>
              <Svg w={28} h={25} stroke="#454749" strokeWidth="5"><path d="M3 2L25 23M25 2L3 23" /></Svg>
            </PanelClose>
          </PanelTabs>
          <ThumbList>
            {THUMBS.map((t) => (
              <ThumbItem key={t.n} $selected={t.selected}>
                <ThumbNumber>{t.n}</ThumbNumber>
                <Thumb>
                  <Drawing w={519} h={390} sw={3.9} frame={4} head={14} />
                  <SlideText $s={11.500} $x={t.a[1]} $y={t.a[3]}><Fit w={t.a[2]}>{t.a[0]}</Fit></SlideText>
                  <SlideText $s={11.500} $x={t.b[0]} $y={t.b[2]}><Fit w={t.b[1]}>Ech= number of pixel (dimension of the array)</Fit></SlideText>
                </Thumb>
              </ThumbItem>
            ))}
          </ThumbList>
        </SidePanel>
        <Splitter />
        <Editor>
          <SlideArea>
            <Slide>
              <Drawing w={2040} h={1531} sw={2} frame={6} head={10.5} />
              <SlideText $s={46} $x={140} $y={1209}>
                <Fit w={1413}>2*<Misspelt>isize</Misspelt> (portion of the characteristic plane of the diffraction pattern)</Fit>
              </SlideText>
              <SlideText $s={46} $x={342} $y={1386}>
                <Fit w={950}><Misspelt>Ech</Misspelt>= <Misspelt>number</Misspelt> of pixel (dimension of the <Misspelt>array</Misspelt>)</Fit>
              </SlideText>
            </Slide>
            <ScrollColumn $top={3}>
              <ScrollCell $h={44}><ScrollArrow /></ScrollCell>
              <ScrollCell $h={680} />
              <ScrollThumb><Grip /></ScrollThumb>
              <ScrollCell $h={46} $line><ScrollArrow down /></ScrollCell>
              <ScrollCell $h={40}><DoubleArrow /></ScrollCell>
              <ScrollCell $h={43}><DoubleArrow down /></ScrollCell>
            </ScrollColumn>
          </SlideArea>
          <Splitter $h />
          <Notes>
            <NotesText><Fit w={692}>Cliquez pour ajouter des commentaires</Fit></NotesText>
            <ScrollColumn>
              <ScrollCell $h={44}><ScrollArrow off /></ScrollCell>
              <ScrollCell $h={45}><ScrollArrow down off /></ScrollCell>
            </ScrollColumn>
          </Notes>
        </Editor>
      </Workspace>

      <StatusBar>
        <StatusCell $w={236} $x={7}><Fit w={215}>Diapositive 2 de 2</Fit></StatusCell>
        <StatusCell $w={199} $x={9}><Fit w={178}>"Thème Office"</Fit></StatusCell>
        <StatusCell $w={275} $x={10}>
          <Svg w={41} h={39}>
            <path d="M1 19L12 10L23 18L40 14V26L18 38L1 28Z" fill="#3f63b8" />
            <path d="M2 18L12 9L22 16L38 12V21L19 33L2 24Z" fill="#f4f6f8" stroke="#9aa3b2" />
            <path d="M22 2L37 24M38 5L22 24" stroke="#f0502f" strokeWidth="5" />
          </Svg>
          <Fit w={194}>Français (France)</Fit>
        </StatusCell>
        <StatusTools>
          <ViewActive>
            <Svg w={30} h={25}>
              <rect x="1.500" y="1.500" width="27" height="22" fill="#fff" stroke="#4e4e55" strokeWidth="3" />
              <path d="M13 2V23M13 17H29" stroke="#4e4e55" strokeWidth="3" />
              <rect x="17" y="5" width="9" height="8" fill="#e5e7f5" stroke="#8b8ba0" strokeWidth="1.500" />
            </Svg>
          </ViewActive>
          <ViewIcons>
            <Svg w={28} h={25} fill="#f7f7f7" stroke="#5a5a5a" strokeWidth="3"><path d="M1.500 1.500h9v7h-9zM17.500 1.500h9v7h-9zM1.500 16.500h9v7h-9zM17.500 16.500h9v7h-9z" /></Svg>
            <Svg w={28} h={27} fill="#f1f1f1" stroke="#5a5a5a" strokeWidth="2"><path d="M1 2H10L14 5L18 2H27V23H18L14 26L10 23H1ZM14 5V26M4 7h6M4 12h6M4 17h6M18 7h6M18 12h6M18 17h6" /></Svg>
            <Svg w={28} h={25} fill="#f7f7f7" stroke="#5a5a5a" strokeWidth="2"><path d="M4 3V16H24V3M14 16V24M8 24H20M9 9H20" /><path d="M0 2H28" strokeWidth="4" /></Svg>
          </ViewIcons>
          <ZoomValue><Fit w={58}>85 %</Fit></ZoomValue>
          <ZoomButton />
          <ZoomTrack>
            <Svg w={22} h={32}><path d="M1 1H21V24L11 31L1 24Z" fill="#f8f9fa" stroke="#7b8490" strokeWidth="2" /><path d="M0 2H22" stroke="#6f7884" strokeWidth="3" /></Svg>
            <Svg w={12} h={9}><path d="M7 0V8" stroke="#8f97a2" strokeWidth="2" /></Svg>
          </ZoomTrack>
          <ZoomButton plus />
          <FitButton>
            <Svg w={39} h={40}>
              <rect x="1.500" y="1.500" width="36" height="37" rx="3" fill="#d5d6d8" stroke="#55585c" strokeWidth="3" />
              <rect x="4" y="5" width="28" height="28" fill="#fbfbfb" />
              <path d="M5 18H13M10 15V21M24 18H32M27 15V21M18 5V13M15 9H21M18 24V32M15 27H21" stroke="#444" strokeWidth="2" />
              <path d="M4 34H34V4" fill="none" stroke="#888" strokeWidth="2" strokeDasharray="2 2" />
            </Svg>
          </FitButton>
        </StatusTools>
      </StatusBar>

      <Taskbar>
        <Wallpaper $x={12} $y={60} $c="#252525"><Fit w={106}>©2016 S</Fit></Wallpaper>
        <Start>
          <Svg w={41} h={41} fill="#fff"><path d="M0 6L17 3.500V19.500H0ZM19 3L41 0V19.500H19ZM0 21.500H17V37.500L0 35ZM19 21.500H41V41L19 38Z" /></Svg>
        </Start>
        <Search>
          <SearchLabel>
            <Svg w={64} h={66} fill="none">
              <circle cx="32" cy="33" r="29.500" stroke="#777" strokeWidth="4" />
              <circle cx="32" cy="33" r="25.500" stroke="#000" strokeWidth="6" />
            </Svg>
            <Lowered $by={2}><Fit w={403}>Taper ici pour rechercher</Fit></Lowered>
          </SearchLabel>
          <Svg w={28} h={41} fill="none" stroke="#333" strokeWidth="2.500">
            <rect x="7" y="1.500" width="14" height="28" rx="5" />
            <path d="M1.500 20V27Q1.500 34 9 34.500H19Q26.500 34 26.500 27V20M14 35V39M7 39.500H21" />
          </Svg>
        </Search>
        {APPS.map((a) => (
          <AppSlot key={a.id}>
            <AppButton $open={a.open} $active={a.active}>{a.icon}</AppButton>
          </AppSlot>
        ))}
        <Wallpaper $x={3380} $y={58} $c="#1a1d21"><Fit w={450}>Background art by Arsen XO</Fit></Wallpaper>
        <Tray>
          <Svg w={37} h={39} fill="none" stroke="#fff" strokeWidth="2.500">
            <ellipse cx="26" cy="8" rx="6" ry="6.500" />
            <path d="M19 22Q21 15 26 15Q34 15 35.500 24" />
            <ellipse cx="11" cy="22" rx="6" ry="6.500" />
            <path d="M1.500 38Q2 29 11 29Q19 29 20 38" />
          </Svg>
          <Svg w={32} h={17} fill="none" stroke="#fff" strokeWidth="2.500"><path d="M1 16L16 1L31 16" /></Svg>
          <Svg w={40} h={28} fill="none" stroke="#fff" strokeWidth="2">
            <path d="M14 6H36V26H10M37 12H39V20H37" />
            <path d="M15 10H33V22H10L15 17Z" fill="#fff" stroke="none" />
            <path d="M1 6H11V12Q11 16 6 16Q1 16 1 12ZM3 0V6M9 0V6M6 16V27" />
          </Svg>
          <Svg w={31} h={31} fill="none" stroke="#fff" strokeWidth="2.200">
            <path d="M1 31A30 30 0 0 1 31 1M9 31A22 22 0 0 1 31 9M17 31A14 14 0 0 1 31 17" />
            <circle cx="27" cy="27" r="3" fill="#fff" stroke="none" />
          </Svg>
          <Clock>
            <Fit w={70}>21:08</Fit>
            <Fit w={150}>14/02/2018</Fit>
          </Clock>
          <Notif>
            <Svg w={60} h={60}>
              <path d="M0 1H41V34H23L17 42V34H0Z" fill="#fff" />
              <path d="M8 10H33M8 18H33M8 26H25" stroke="#0b0d10" strokeWidth="2.500" />
              <circle cx="39" cy="38" r="20" fill="#2c2e30" stroke="#8d8f91" strokeWidth="2" />
              <text x="39" y="48" textAnchor="middle" fontFamily="Open Sans" fontSize="27" fontWeight="600" fill="#fff">1</text>
            </Svg>
          </Notif>
          <DesktopEdge />
        </Tray>
      </Taskbar>
    </Screen>
  );
}
